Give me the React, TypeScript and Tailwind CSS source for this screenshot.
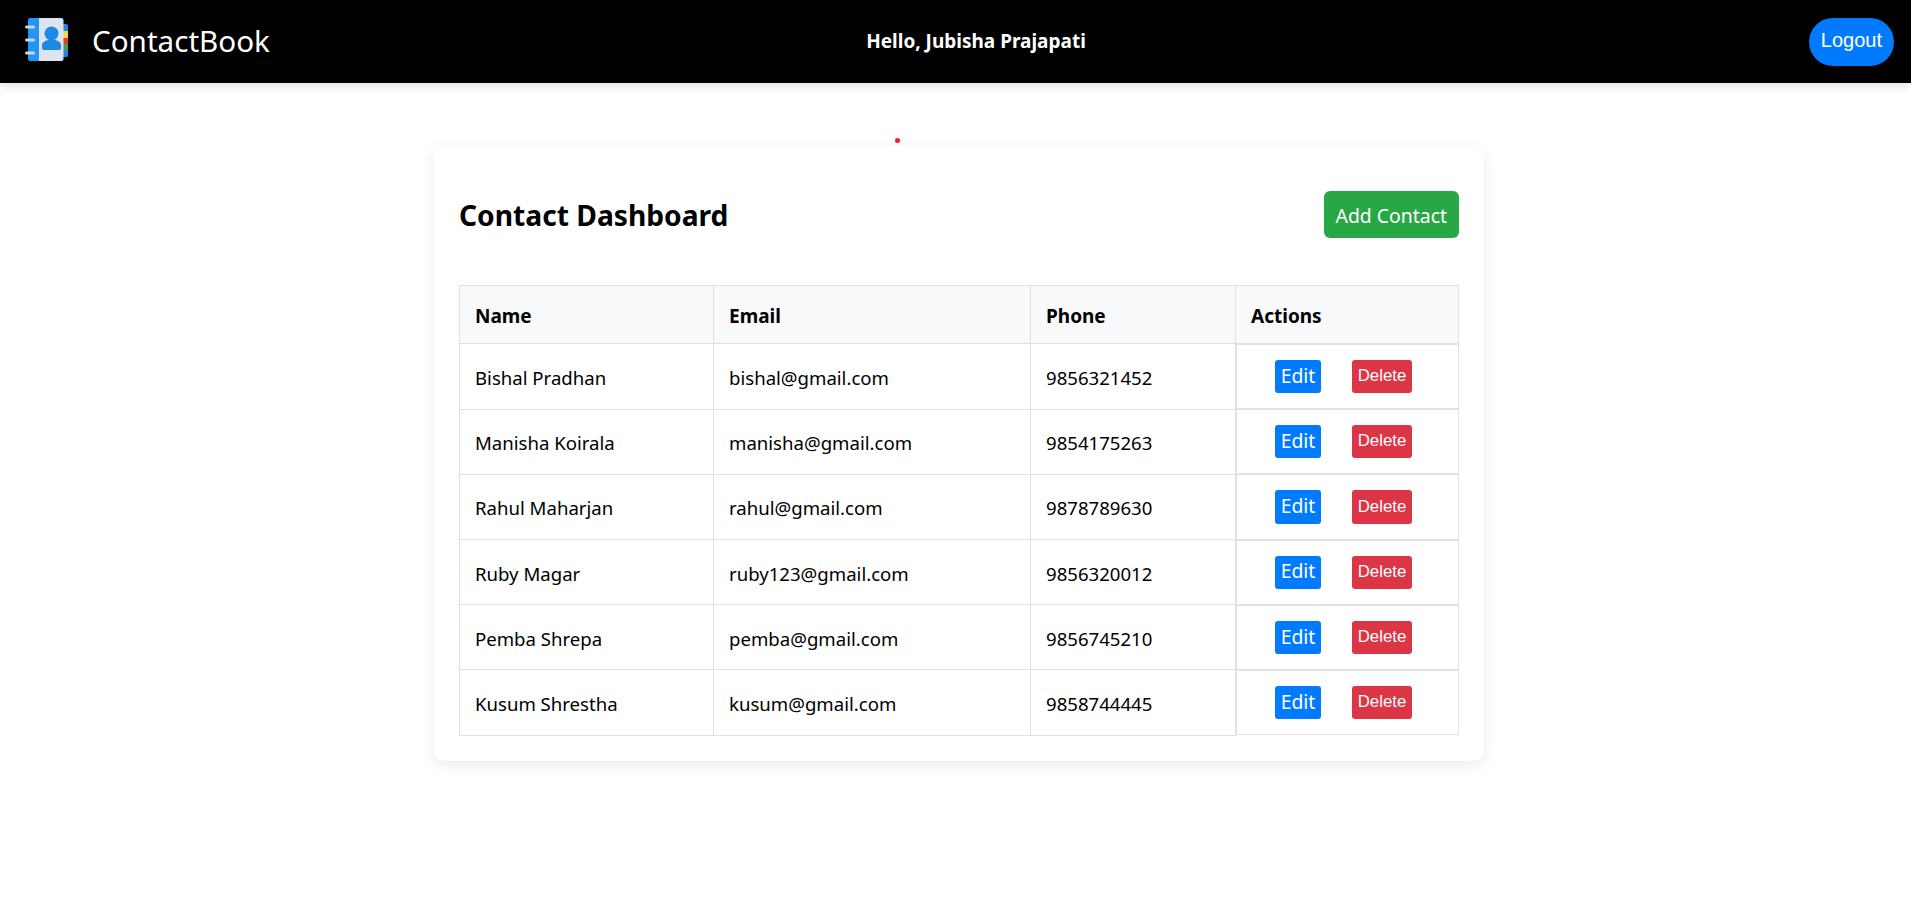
const contacts = [
  { name: 'Bishal Pradhan', email: 'bishal@gmail.com', phone: '9856321452' },
  { name: 'Manisha Koirala', email: 'manisha@gmail.com', phone: '9854175263' },
  { name: 'Rahul Maharjan', email: 'rahul@gmail.com', phone: '9878789630' },
  { name: 'Ruby Magar', email: 'ruby123@gmail.com', phone: '9856320012' },
  { name: 'Pemba Shrepa', email: 'pemba@gmail.com', phone: '9856745210' },
  { name: 'Kusum Shrestha', email: 'kusum@gmail.com', phone: '9858744445' },
];

function Logo() {
  return (
    <svg width="44" height="44" viewBox="0 0 44 44" className="-mt-[3px] shrink-0">
      <rect x="37" y="6" width="6" height="33" rx="1.5" fill="#1e88e5" />
      <rect x="38" y="13" width="5" height="7" fill="#fdd835" />
      <rect x="38" y="20" width="5" height="6" fill="#e53935" />
      <rect x="38" y="26" width="5" height="6" fill="#43a047" />
      <path d="M3 2a2 2 0 0 1 2-2h9v43H5a2 2 0 0 1-2-2z" fill="#2196f3" />
      <path d="M14 0h22a2.500 2.500 0 0 1 2.500 2.500v38a2.500 2.500 0 0 1-2.500 2.500H14z" fill="#dde4ef" />
      <circle cx="26.500" cy="15.500" r="7" fill="#1e88e5" />
      <path d="M17 30v-2.500c0-3.500 3-5.500 9.500-5.500s9.500 2 9.500 5.500V30a2 2 0 0 1-2 2H19a2 2 0 0 1-2-2z" fill="#1e88e5" />
      <rect x="0" y="7.500" width="10" height="3" rx="1.500" fill="#cfd8dc" />
      <rect x="0" y="20.500" width="10" height="3" rx="1.500" fill="#cfd8dc" />
      <rect x="0" y="33.500" width="10" height="3" rx="1.500" fill="#cfd8dc" />
    </svg>
  );
}

export default function App() {
  return (
    <div className="min-h-[902px] bg-white text-black font-['Noto_Sans',sans-serif]">
      <nav className="relative flex h-[83px] items-center justify-between bg-black pl-[25px] pr-[17px] shadow-[0_4px_8px_rgba(0,0,0,0.1)]">
        <div className="flex w-[433px] items-center gap-[23px]">
          <Logo />
          <span className="-mt-[1px] text-[29.6px] text-white">ContactBook</span>
        </div>
        <span className="text-[19px] font-bold text-white">Hello, Jubisha Prajapati</span>
        <div className="flex w-[400px] justify-end">
          <button className="h-[48px] rounded-[24px] bg-[#007bff] px-[12px] pb-[4px] font-['Liberation_Sans',sans-serif] text-[20px] text-white">
            Logout
          </button>
        </div>
      </nav>

      <div className="flex justify-center pl-[7px] pt-[62px]">
        <div className="relative w-[1050px] rounded-[10px] bg-white p-[25px] shadow-[0_4px_15px_rgba(0,0,0,0.08)]">
          <span className="absolute -top-[7px] left-[461px] h-[5px] w-[5px] rounded-full bg-[#ff1a2e]" />
          <div className="mb-[47px] mt-[21px] flex items-center justify-between">
            <h2 className="pt-[2px] text-[28.2px] font-bold">Contact Dashboard</h2>
            <button className="h-[47px] rounded-[6px] bg-[#28a745] px-[12px] pt-[3px] text-[19.4px] text-white">
              Add Contact
            </button>
          </div>

          <table className="w-[999px] table-fixed border-collapse text-left text-[18.6px]">
            <colgroup>
              <col className="w-[254px]" />
              <col className="w-[317px]" />
              <col className="w-[205px]" />
              <col className="w-[223px]" />
            </colgroup>
            <thead>
              <tr className="bg-[#f8f9fa]">
                {['Name', 'Email', 'Phone', 'Actions'].map((h) => (
                  <th key={h} className="h-[58px] border border-[#dee2e6] px-[15px] pb-[13px] pt-[17px] text-[19px] font-bold leading-[27px]">
                    {h}
                  </th>
                ))}
              </tr>
            </thead>
            <tbody>
              {contacts.map((c) => (
                <tr key={c.email}>
                  <td className="border border-[#dee2e6] px-[15px] pb-[14px] pt-[16px] leading-[27px]">{c.name}</td>
                  <td className="border border-[#dee2e6] px-[15px] pb-[14px] pt-[16px] leading-[27px]">{c.email}</td>
                  <td className="border border-[#dee2e6] px-[15px] pb-[14px] pt-[16px] leading-[27px]">{c.phone}</td>
                  <td className="flex gap-[31px] border border-[#dee2e6] py-[15px] pl-[38px]">
                    <button className="h-[33.2px] w-[46px] rounded-[3px] bg-[#007bff] pb-[2px] text-[19.4px] leading-none text-white">Edit</button>
                    <button className="h-[33.2px] w-[60px] rounded-[3px] bg-[#dc3545] font-['Liberation_Sans',sans-serif] text-[16.8px] leading-none text-white">
                      Delete
                    </button>
                  </td>
                </tr>
              ))}
            </tbody>
          </table>
        </div>
      </div>
    </div>
  );
}
